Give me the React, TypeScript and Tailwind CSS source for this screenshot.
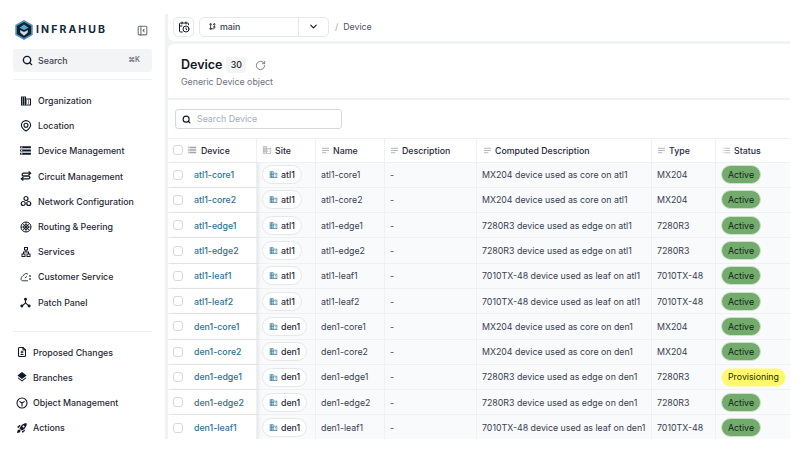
import type { ReactNode } from "react";
import { LuCalendarClock, LuChevronDown, LuSearch, LuList, LuRotateCw } from "react-icons/lu";
import { MdDomain, MdStorage, MdLayers, MdRocketLaunch, MdOutlineLan } from "react-icons/md";
import { TbCircles, TbFileDiff, TbLayoutSidebarLeftCollapse, TbGitBranch } from "react-icons/tb";

function PatchIcon() {
  return (
    <svg viewBox="0 0 12 12" className="w-[11px] h-[11px]" fill="#111827" stroke="#111827">
      <path d="M6 3 V6.5 L2 10 M6 6.5 L10 10" fill="none" strokeWidth="1.2" />
      <circle cx="6" cy="2.4" r="1.6" stroke="none" />
      <circle cx="2" cy="9.8" r="1.6" stroke="none" />
      <circle cx="10" cy="9.8" r="1.6" stroke="none" />
    </svg>
  );
}

function PinIcon() {
  return (
    <svg viewBox="0 0 12 12" className="w-[12px] h-[12px]" fill="none" stroke="#111827" strokeWidth="1.1">
      <path d="M6 11 C3.5 9.3 1.4 7.6 1.4 5.2 A4.6 4.6 0 0 1 10.6 5.2 C10.6 7.6 8.5 9.3 6 11 Z" />
      <circle cx="6" cy="5.2" r="2" />
    </svg>
  );
}

function SwapIcon() {
  return (
    <svg viewBox="0 0 12 12" className="w-[12px] h-[12px]" fill="none" stroke="#111827" strokeWidth="1.3">
      <path d="M10.5 3.2 H3 A1.6 1.6 0 0 0 3 6 H9 A1.6 1.6 0 0 1 9 8.8 H1.5" />
      <path d="M8.6 1.4 L10.6 3.2 L8.6 5 M3.4 7 L1.4 8.8 L3.4 10.6" />
    </svg>
  );
}

function RoutingIcon() {
  return (
    <svg viewBox="0 0 12 12" className="w-[12px] h-[12px]" fill="none" stroke="#111827" strokeWidth="1">
      <circle cx="6" cy="6" r="5" />
      <circle cx="6" cy="6" r="2.4" />
      <path d="M6 1 V11 M1 6 H11 M2.6 2.6 L9.4 9.4 M9.4 2.6 L2.6 9.4" strokeWidth="0.8" />
    </svg>
  );
}

function CustomerIcon() {
  return (
    <svg viewBox="0 0 12 12" className="w-[12px] h-[12px]" fill="none" stroke="#374151" strokeWidth="1">
      <path d="M8 3.4 C7 2 4.6 2.2 3.8 4.2 C2.4 4.6 1 6.4 1 8 C1 9.2 2 9.8 3 9.8 H8" />
      <circle cx="10" cy="5" r="0.9" fill="#374151" stroke="none" />
      <circle cx="10" cy="8" r="0.9" fill="#374151" stroke="none" />
      <path d="M4.8 7 L7 5.4" />
    </svg>
  );
}

function ObjectIcon() {
  return (
    <svg viewBox="0 0 12 12" className="w-[12px] h-[12px]" fill="none" stroke="#111827" strokeWidth="1.1">
      <circle cx="6" cy="6" r="5" />
      <path d="M3.4 4.4 L6 6 L8.6 4.4 M6 6 V9.4" />
    </svg>
  );
}

function Logo() {
  return (
    <svg viewBox="0 0 20 22" className="w-[18px] h-[20px] shrink-0">
      <path d="M10 1 L18.8 6 V16 L10 21 L1.2 16 V6 Z" fill="#0f2233" stroke="#4b93ba" strokeWidth="1.8" />
      <path d="M5 8.4 L10 5 L15 8.4 L10 11 Z" fill="#5aa9d0" />
      <path d="M5.6 11 L10 13.2 L14.4 11 L14 14 L10 17.4 L6 14 Z" fill="#d3dbe1" />
    </svg>
  );
}

function TextIcon() {
  return (
    <svg viewBox="0 0 10 8" className="w-[9px] h-[7px] shrink-0" stroke="#a8adb5" strokeWidth="1">
      <path d="M1 1.5 H9 M1 4 H9 M1 6.5 H6" />
    </svg>
  );
}

const NAV: [string, ReactNode][] = [
  ["Organization", <MdDomain size={12} />],
  ["Location", <PinIcon />],
  ["Device Management", <MdStorage size={13} />],
  ["Circuit Management", <SwapIcon />],
  ["Network Configuration", <TbCircles size={12} strokeWidth={2.4} />],
  ["Routing & Peering", <RoutingIcon />],
  ["Services", <MdOutlineLan size={12} />],
  ["Customer Service", <CustomerIcon />],
  ["Patch Panel", <PatchIcon />],
];

const NAV2: [string, ReactNode][] = [
  ["Proposed Changes", <TbFileDiff size={12} strokeWidth={2.2} />],
  ["Branches", <MdLayers size={12} />],
  ["Object Management", <ObjectIcon />],
  ["Actions", <MdRocketLaunch size={12} />],
];

const ROWS = [
  ["atl1-core1", "atl1", "MX204 device used as core on atl1", "MX204", "Active"],
  ["atl1-core2", "atl1", "MX204 device used as core on atl1", "MX204", "Active"],
  ["atl1-edge1", "atl1", "7280R3 device used as edge on atl1", "7280R3", "Active"],
  ["atl1-edge2", "atl1", "7280R3 device used as edge on atl1", "7280R3", "Active"],
  ["atl1-leaf1", "atl1", "7010TX-48 device used as leaf on atl1", "7010TX-48", "Active"],
  ["atl1-leaf2", "atl1", "7010TX-48 device used as leaf on atl1", "7010TX-48", "Active"],
  ["den1-core1", "den1", "MX204 device used as core on den1", "MX204", "Active"],
  ["den1-core2", "den1", "MX204 device used as core on den1", "MX204", "Active"],
  ["den1-edge1", "den1", "7280R3 device used as edge on den1", "7280R3", "Provisioning"],
  ["den1-edge2", "den1", "7280R3 device used as edge on den1", "7280R3", "Active"],
  ["den1-leaf1", "den1", "7010TX-48 device used as leaf on den1", "7010TX-48", "Active"],
];

const GRID = "grid grid-cols-[89px_59px_69px_92px_175px_64px_74px]";
const CELL = "flex items-center px-[5px] border-r border-[#eff0f3] whitespace-nowrap overflow-hidden";

function Checkbox() {
  return <span className="w-[10px] h-[10px] shrink-0 rounded-[3px] border border-[#d5d8de] bg-white" />;
}

export default function App() {
  return (
    <div className="w-[800px] h-[455px] bg-white flex overflow-hidden font-['Inter',sans-serif] text-[8.8px] text-[#374151]">
      {/* SIDEBAR */}
      <aside className="w-[165px] shrink-0 flex flex-col px-[13px] pt-[20px]">
        <div className="flex items-center h-[20px] pl-[2px] pr-[3px]">
          <Logo />
          <span className="ml-[3px] font-bold text-[10.5px] tracking-[0.2em] text-[#12293c]">INFRAHUB</span>
          <TbLayoutSidebarLeftCollapse size={13} className="ml-auto text-[#6b7280]" />
        </div>
        <div className="mt-[9px] h-[23px] shrink-0 rounded-[3px] bg-[#f3f4f6] flex items-center pl-[9px] pr-[12px] text-[#374151] font-medium">
          <LuSearch size={11} className="text-[#111827]" strokeWidth={3} />
          <span className="ml-[5px]">Search</span>
          <span className="ml-auto text-[7px] font-semibold text-[#6b7280]">⌘K</span>
        </div>
        <div className="mt-[7px] h-px bg-[#eeeff1]" />
        <nav className="mt-[8px] flex flex-col">
          {NAV.map(([label, icon]) => (
            <div key={label} className="h-[25.2px] flex items-center text-[#1f2937] font-medium">
              <span className="w-[25px] flex justify-center text-[#111827]">{icon}</span>
              <span>{label}</span>
            </div>
          ))}
        </nav>
        <div className="mt-[16px] h-px bg-[#eeeff1]" />
        <nav className="mt-[8px] flex flex-col">
          {NAV2.map(([label, icon]) => (
            <div key={label} className="h-[25.2px] flex items-center text-[#1f2937] font-medium">
              <span className="w-[20px] flex justify-start pl-[3px] text-[#111827]">{icon}</span>
              <span>{label}</span>
            </div>
          ))}
        </nav>
      </aside>

      {/* MAIN */}
      <main className="w-[625px] h-[425px] mt-[14px] pl-[3px] bg-[#f1f2f4] flex flex-col overflow-hidden">
        <header className="h-[27px] shrink-0 bg-white rounded-bl-[6px] flex items-center pl-[5px]">
          <button className="w-[21px] h-[20px] mt-[-2px] rounded-[5px] border border-[#e5e7eb] flex items-center justify-center text-[#111827]">
            <LuCalendarClock size={12} />
          </button>
          <div className="ml-[5px] w-[130px] h-[20px] mt-[-2px] rounded-[5px] border border-[#e5e7eb] flex items-center">
            <div className="w-[98px] flex items-center pl-[8px] text-[#374151] font-medium">
              <TbGitBranch size={9} className="text-[#111827]" />
              <span className="ml-[3px]">main</span>
            </div>
            <div className="flex-1 h-full border-l border-[#e5e7eb] flex items-center justify-center text-[#111827]">
              <LuChevronDown size={11} strokeWidth={2.5} />
            </div>
          </div>
          <span className="ml-[6px] mt-[-2px] text-[#9ca3af]">/</span>
          <span className="ml-[5px] mt-[-2px] text-[#4b5563]">Device</span>
        </header>

        <div className="mt-[3px] flex-1 bg-white rounded-tl-[6px] flex flex-col overflow-hidden">
          <div className="h-[56px] shrink-0 pl-[13px] pt-[13px] border-b-2 border-[#f1f2f4]">
            <div className="flex items-center">
              <span className="text-[12.5px] font-semibold text-[#111827] leading-[16px]">Device</span>
              <span className="ml-[4px] w-[20px] h-[16px] rounded-[3px] bg-[#f3f4f6] flex items-center justify-center font-medium text-[#111827]">30</span>
              <LuRotateCw size={11} className="ml-[9px] text-[#6b7a90]" />
            </div>
            <div className="mt-[2px] text-[#6b7280]">Generic Device object</div>
          </div>

          <div className="h-[38px] shrink-0 pl-[7px] flex items-center">
            <div className="w-[167px] h-[20px] rounded-[3px] border border-[#d5d8de] flex items-center pl-[6px]">
              <LuSearch size={9} className="text-[#111827]" strokeWidth={3} />
              <span className="ml-[6px] text-[#a3adbb]">Search Device</span>
            </div>
          </div>

          <div className={`${GRID} h-[24.5px] shrink-0 border-y border-[#eff0f3] font-medium text-[#1f2937]`}>
            <div className={`${CELL} gap-[4px]`}>
              <Checkbox />
              <MdStorage size={10} className="text-[#9ca3af]" />
              <span>Device</span>
            </div>
            <div className={`${CELL} gap-[3px]`}>
              <MdDomain size={10} className="text-[#b3b8c0]" />
              <span>Site</span>
            </div>
            <div className={`${CELL} gap-[3px]`}>
              <TextIcon />
              <span>Name</span>
            </div>
            <div className={`${CELL} gap-[3px]`}>
              <TextIcon />
              <span>Description</span>
            </div>
            <div className={`${CELL} gap-[3px] pl-[6px]`}>
              <TextIcon />
              <span>Computed Description</span>
            </div>
            <div className={`${CELL} gap-[3px]`}>
              <TextIcon />
              <span>Type</span>
            </div>
            <div className={`${CELL} gap-[3px] pl-[6px] border-r-0`}>
              <LuList size={9} className="text-[#a8adb5]" />
              <span>Status</span>
            </div>
          </div>

          {ROWS.map(([name, site, computed, type, status]) => (
            <div key={name} className={`${GRID} h-[25.3px] shrink-0 border-b border-[#eff0f3] bg-[#f9fafb]`}>
              <div className={`${CELL} bg-white shadow-[2px_0_3px_rgba(0,0,0,0.08)] z-10`}>
                <Checkbox />
                <span className="ml-[11px] text-[#2b7297] font-medium">{name}</span>
              </div>
              <div className={CELL}>
                <span className="h-[19px] px-[6px] rounded-full bg-white border border-[#e5e7eb] flex items-center gap-[3px] font-medium text-[#1f2937]">
                  <MdDomain size={9} className="text-[#4f89a8]" />
                  {site}
                </span>
              </div>
              <div className={CELL}>{name}</div>
              <div className={CELL}>-</div>
              <div className={CELL}>{computed}</div>
              <div className={CELL}>{type}</div>
              <div className={`${CELL} border-r-0`}>
                <span
                  className={
                    status === "Active"
                      ? "h-[19px] px-[6px] rounded-full bg-[#72ab6c] border border-[#cfe3cb] flex items-center text-[#14241a]"
                      : "h-[19px] px-[6px] rounded-full bg-[#fdf86f] border border-[#fdfbb5] flex items-center text-[#2b2b12]"
                  }
                >
                  {status}
                </span>
              </div>
            </div>
          ))}
        </div>
      </main>
    </div>
  );
}
